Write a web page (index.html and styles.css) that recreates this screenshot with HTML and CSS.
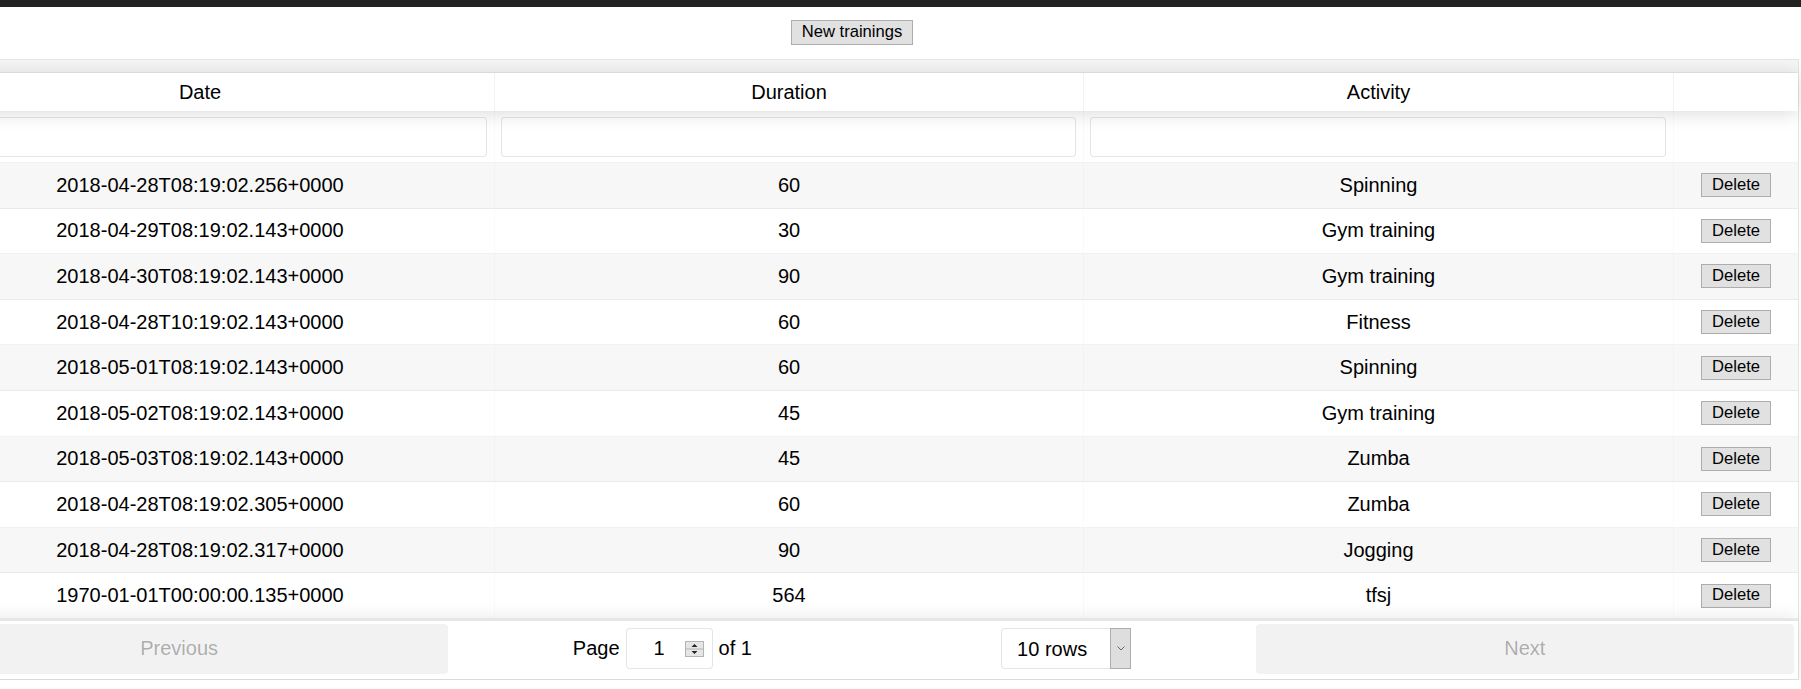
FILE: index.html
```html
<!DOCTYPE html>
<html lang="en">
<head>
<meta charset="utf-8">
<title>Trainings</title>
<link rel="stylesheet" href="styles.css">
</head>
<body>
<div class="topbar"></div>
<div class="app">
  <div class="toolbar"><button class="win-btn new-btn" type="button">New trainings</button></div>
  <div class="rtable">
    <div class="group-row"></div>
    <div class="row thead">
      <div class="th">Date</div>
      <div class="th">Duration</div>
      <div class="th">Activity</div>
      <div class="th last"></div>
    </div>
    <div class="row filters">
      <div class="fc"><input class="filter-input" type="text"></div>
      <div class="fc"><input class="filter-input" type="text"></div>
      <div class="fc"><input class="filter-input" type="text"></div>
      <div class="fc last"></div>
    </div>
    <div class="tbody">
      <div class="row tr odd"><div class="td">2018-04-28T08:19:02.256+0000</div><div class="td">60</div><div class="td">Spinning</div><div class="td last"><button class="win-btn del-btn" type="button">Delete</button></div></div>
      <div class="row tr"><div class="td">2018-04-29T08:19:02.143+0000</div><div class="td">30</div><div class="td">Gym training</div><div class="td last"><button class="win-btn del-btn" type="button">Delete</button></div></div>
      <div class="row tr odd"><div class="td">2018-04-30T08:19:02.143+0000</div><div class="td">90</div><div class="td">Gym training</div><div class="td last"><button class="win-btn del-btn" type="button">Delete</button></div></div>
      <div class="row tr"><div class="td">2018-04-28T10:19:02.143+0000</div><div class="td">60</div><div class="td">Fitness</div><div class="td last"><button class="win-btn del-btn" type="button">Delete</button></div></div>
      <div class="row tr odd"><div class="td">2018-05-01T08:19:02.143+0000</div><div class="td">60</div><div class="td">Spinning</div><div class="td last"><button class="win-btn del-btn" type="button">Delete</button></div></div>
      <div class="row tr"><div class="td">2018-05-02T08:19:02.143+0000</div><div class="td">45</div><div class="td">Gym training</div><div class="td last"><button class="win-btn del-btn" type="button">Delete</button></div></div>
      <div class="row tr odd"><div class="td">2018-05-03T08:19:02.143+0000</div><div class="td">45</div><div class="td">Zumba</div><div class="td last"><button class="win-btn del-btn" type="button">Delete</button></div></div>
      <div class="row tr"><div class="td">2018-04-28T08:19:02.305+0000</div><div class="td">60</div><div class="td">Zumba</div><div class="td last"><button class="win-btn del-btn" type="button">Delete</button></div></div>
      <div class="row tr odd"><div class="td">2018-04-28T08:19:02.317+0000</div><div class="td">90</div><div class="td">Jogging</div><div class="td last"><button class="win-btn del-btn" type="button">Delete</button></div></div>
      <div class="row tr"><div class="td">1970-01-01T00:00:00.135+0000</div><div class="td">564</div><div class="td">tfsj</div><div class="td last"><button class="win-btn del-btn" type="button">Delete</button></div></div>
    </div>
    <div class="pagination">
      <button class="pg-btn" type="button" disabled>Previous</button>
      <div class="pg-center">
        <div class="page-info">
          <span>Page</span>
          <div class="page-jump">
            <input class="jump-input" type="text" value="1">
            <svg class="spinner" width="19" height="16" viewBox="0 0 19 16">
              <rect x="0.5" y="0.5" width="18" height="15" fill="#e6e6e6" stroke="#b4b4b4"/>
              <line x1="1" y1="8" x2="18" y2="8" stroke="#b4b4b4"/>
              <polygon points="6.5,6 9.5,3 12.5,6" fill="#222"/>
              <polygon points="6.5,10 9.5,13 12.5,10" fill="#222"/>
            </svg>
          </div>
          <span>of 1</span>
        </div>
        <div class="size-select">
          <select class="size-native"><option>10 rows</option></select>
          <span class="size-arrow">
            <svg width="8" height="5" viewBox="0 0 8 5"><polyline points="0.5,0.5 4,4 7.5,0.5" fill="none" stroke="#666" stroke-width="1"/></svg>
          </span>
        </div>
      </div>
      <button class="pg-btn" type="button" disabled>Next</button>
    </div>
  </div>
</div>
</body>
</html>
```
FILE: styles.css
```css
html, body {
  margin: 0;
  padding: 0;
  background: #fff;
}
body {
  font-family: "Liberation Sans", Arial, sans-serif;
  color: #000;
  overflow: hidden;
}
.topbar {
  height: 7px;
  background: #222;
}
.app {
  margin-left: -95px;
  width: 1894px;
}
.toolbar {
  height: 52px;
  box-sizing: border-box;
  padding-top: 13px;
  text-align: center;
}
.win-btn {
  font-family: "Liberation Sans", Arial, sans-serif;
  font-size: 16.6px;
  background: #e1e1e1;
  border: 1px solid #adadad;
  border-radius: 0;
  padding: 0 10px;
  color: #000;
  line-height: 1;
}
.new-btn {
  height: 25px;
  vertical-align: top;
}
.del-btn {
  height: 24px;
}
.rtable {
  border: 1px solid rgba(0, 0, 0, 0.1);
  display: flex;
  flex-direction: column;
}
.group-row {
  height: 12px;
  background: rgba(0, 0, 0, 0.04);
  border-bottom: 1px solid rgba(0, 0, 0, 0.05);
}
.row {
  display: grid;
  grid-template-columns: 589px 589px 590px 1fr;
}
.thead {
  height: 38px;
  background: #fff;
  box-shadow: 0 2px 19px 0 rgba(0, 0, 0, 0.15);
  position: relative;
  z-index: 1;
}
.th {
  border-right: 1px solid rgba(0, 0, 0, 0.05);
  display: flex;
  align-items: center;
  justify-content: center;
  font-size: 20px;
}
.th.last, .fc.last, .td.last {
  border-right: 0;
}
.filters {
  height: 52px;
  box-sizing: border-box;
  border-bottom: 1px solid rgba(0, 0, 0, 0.05);
}
.fc {
  padding: 6px 7px 0 6px;
  border-right: 1px solid rgba(0, 0, 0, 0.02);
}
.filter-input {
  display: block;
  width: 100%;
  height: 40px;
  box-sizing: border-box;
  border: 1px solid rgba(0, 0, 0, 0.1);
  border-radius: 4px;
  background: #fff;
  margin: 0;
  font-size: 20px;
}
.tr {
  height: 45.6px;
  box-sizing: border-box;
  border-bottom: 1px solid rgba(0, 0, 0, 0.05);
}
.tr.odd {
  background: rgba(0, 0, 0, 0.03);
}
.td {
  border-right: 1px solid rgba(0, 0, 0, 0.02);
  display: flex;
  align-items: center;
  justify-content: center;
  font-size: 20px;
  line-height: 23px;
  white-space: nowrap;
}
.pagination {
  display: flex;
  align-items: stretch;
  padding: 3px 4px 5px;
  border-top: 2px solid rgba(0, 0, 0, 0.1);
  box-shadow: 0 0 19px 0 rgba(0, 0, 0, 0.1);
  position: relative;
}
.pg-btn {
  flex: 1;
  height: 50px;
  border: 0;
  border-radius: 4px;
  background: rgba(0, 0, 0, 0.05);
  color: rgba(0, 0, 0, 0.3);
  font-family: "Liberation Sans", Arial, sans-serif;
  font-size: 20px;
  padding: 0;
}
.pg-center {
  flex: 1.5;
  display: flex;
  align-items: center;
  justify-content: space-around;
}
.page-info {
  display: flex;
  align-items: center;
  gap: 6px;
  margin: 0 12px;
  font-size: 20px;
  white-space: nowrap;
}
.page-jump {
  width: 87px;
  height: 41px;
  box-sizing: border-box;
  border: 1px solid rgba(0, 0, 0, 0.1);
  border-radius: 4px;
  display: flex;
  align-items: center;
  background: #fff;
}
.jump-input {
  flex: 1;
  min-width: 0;
  border: 0;
  outline: none;
  background: transparent;
  text-align: center;
  font-family: "Liberation Sans", Arial, sans-serif;
  font-size: 20px;
  padding: 0 0 0 7px;
  margin: 0;
  color: #000;
}
.spinner {
  display: block;
  margin-right: 8px;
  flex: none;
}
.size-select {
  width: 130px;
  height: 41px;
  box-sizing: border-box;
  border: 1px solid rgba(0, 0, 0, 0.1);
  border-radius: 4px;
  display: flex;
  margin: 0 12px;
  background: #fff;
}
.size-native {
  flex: 1;
  min-width: 0;
  appearance: none;
  -webkit-appearance: none;
  border: 0;
  background: transparent;
  font-family: "Liberation Sans", Arial, sans-serif;
  font-size: 20px;
  color: #000;
  padding: 0 0 0 15px;
  margin: 0;
  outline: none;
}
.size-arrow {
  width: 21px;
  margin: -1px -1px -1px 0;
  box-sizing: border-box;
  background: #dedede;
  border: 1px solid #adadad;
  display: flex;
  align-items: center;
  justify-content: center;
}
.size-arrow svg {
  display: block;
}
```
